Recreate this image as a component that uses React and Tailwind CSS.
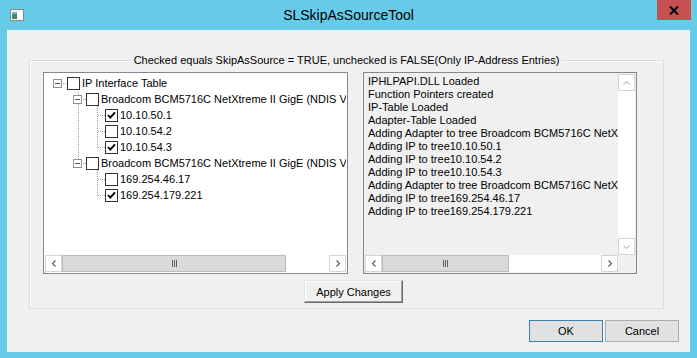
import React from 'react'

const TREE = [
  { level: 0, expander: true, checked: false, text: 'IP Interface Table' },
  { level: 1, expander: true, checked: false, text: 'Broadcom BCM5716C NetXtreme II GigE (NDIS VBD Client) #2' },
  { level: 2, checked: true, text: '10.10.50.1' },
  { level: 2, checked: false, text: '10.10.54.2' },
  { level: 2, checked: true, text: '10.10.54.3' },
  { level: 1, expander: true, checked: false, text: 'Broadcom BCM5716C NetXtreme II GigE (NDIS VBD Client) #1' },
  { level: 2, checked: false, text: '169.254.46.17' },
  { level: 2, checked: true, text: '169.254.179.221' },
]

const LOG = [
  'IPHLPAPI.DLL Loaded',
  'Function Pointers created',
  'IP-Table Loaded',
  'Adapter-Table Loaded',
  'Adding Adapter to tree Broadcom BCM5716C NetXtreme II GigE (NDIS VBD Client) #2',
  'Adding IP to tree10.10.50.1',
  'Adding IP to tree10.10.54.2',
  'Adding IP to tree10.10.54.3',
  'Adding Adapter to tree Broadcom BCM5716C NetXtreme II GigE (NDIS VBD Client) #1',
  'Adding IP to tree169.254.46.17',
  'Adding IP to tree169.254.179.221',
]

function Expander() {
  return (
    <div className="flex h-[9px] w-[9px] shrink-0 items-center justify-center border border-[#919191] bg-white">
      <div className="h-px w-[5px] bg-[#4d4d4d]" />
    </div>
  )
}

function Check({ checked }) {
  return (
    <div className="h-[13px] w-[13px] shrink-0 border border-[#333333] bg-white">
      {checked && (
        <svg width="11" height="11" viewBox="0 0 11 11">
          <path d="M2 5.2 L4.3 7.6 L9 2.4" fill="none" stroke="#000" strokeWidth="1.8" />
        </svg>
      )}
    </div>
  )
}

function TreeLines() {
  const dot = { stroke: '#a0a0a0', strokeWidth: 1, strokeDasharray: '1 1', shapeRendering: 'crispEdges' }
  return (
    <svg className="pointer-events-none absolute left-0 top-0" width="300" height="200">
      {/* root to checkbox */}
      <line x1="18" y1="9.5" x2="23" y2="9.5" style={dot} />
      {/* level 1 trunk */}
      <line x1="33.5" y1="18" x2="33.5" y2="89" style={dot} />
      <line x1="38" y1="25.5" x2="42" y2="25.5" style={dot} />
      <line x1="38" y1="89.5" x2="42" y2="89.5" style={dot} />
      {/* level 2 under adapter 1 */}
      <line x1="52.5" y1="30" x2="52.5" y2="73" style={dot} />
      <line x1="53" y1="41.5" x2="61" y2="41.5" style={dot} />
      <line x1="53" y1="57.5" x2="61" y2="57.5" style={dot} />
      <line x1="53" y1="73.5" x2="61" y2="73.5" style={dot} />
      {/* level 2 under adapter 2 */}
      <line x1="52.5" y1="94" x2="52.5" y2="121" style={dot} />
      <line x1="53" y1="105.5" x2="61" y2="105.5" style={dot} />
      <line x1="53" y1="121.5" x2="61" y2="121.5" style={dot} />
    </svg>
  )
}

function Arrow({ dir, light }) {
  const c = light ? '#c4c4c4' : '#606060'
  const d = {
    left: 'M9.5 4.5 L6.5 7.5 L9.5 10.5',
    right: 'M6.5 4.5 L9.5 7.5 L6.5 10.5',
    up: 'M4.5 9.5 L7.5 6.5 L10.5 9.5',
    down: 'M4.5 6.5 L7.5 9.5 L10.5 6.5',
  }[dir]
  return (
    <div className="h-[17px] w-[17px] shrink-0 border border-[#d4d4d4] bg-white">
      <svg width="15" height="15" viewBox="0 0 15 15">
        <path d={d} fill="none" stroke={c} strokeWidth="1.2" />
      </svg>
    </div>
  )
}

function Grip() {
  return (
    <div className="flex gap-px">
      <div className="h-[7px] w-px bg-[#606060]" />
      <div className="h-[7px] w-px bg-[#606060]" />
      <div className="h-[7px] w-px bg-[#606060]" />
    </div>
  )
}

function HScroll({ thumb }) {
  return (
    <div className="flex h-[17px] bg-white">
      <Arrow dir="left" />
      <div className={`flex items-center justify-center border border-[#bcbcbc] bg-[#dadada] ${thumb}`}>
        <Grip />
      </div>
      <div className="flex-1" />
      <Arrow dir="right" />
    </div>
  )
}

export default function App() {
  return (
    <div className="flex h-[358px] w-[697px] flex-col bg-[#65cbe8] font-['Liberation_Sans',Arial,sans-serif] text-[11px] text-black">
      {/* title bar */}
      <div className="grid h-[30px] shrink-0 grid-cols-[1fr_auto_1fr]">
        <div className="pl-[10px] pt-[9px]">
          <svg width="14" height="12" viewBox="0 0 14 12">
            <rect x="0.5" y="0.5" width="13" height="11" fill="#f4f4f4" stroke="#8a8a8a" />
            <rect x="2" y="3" width="5" height="7" fill="#3f8a6e" />
            <rect x="2" y="3" width="5" height="2" fill="#7fb0d0" />
            <rect x="8" y="3" width="4" height="7" fill="#ffffff" />
          </svg>
        </div>
        <div className="pt-[6px] text-[14px] leading-[18px] text-black">SLSkipAsSourceTool</div>
        <div className="flex justify-end pr-[6px]">
          <div className="flex h-[20px] w-[34px] items-center justify-center bg-[#c75050]">
            <svg width="10" height="9" viewBox="0 0 10 9">
              <path d="M1 0.5 L9 8.5 M9 0.5 L1 8.5" stroke="#000" strokeWidth="2" />
            </svg>
          </div>
        </div>
      </div>

      {/* client area */}
      <div className="mx-[7px] flex h-[322px] flex-col bg-[#f0f0f0] pl-[22px] pt-[30px]">
        {/* group box */}
        <div className="relative h-[249px] w-[635px] border border-[#d5dfe5] pl-[13px] pt-[11px] shadow-[inset_1px_1px_0_#ffffff]">
          <div className="absolute left-1/2 top-[-8px] -translate-x-1/2 whitespace-nowrap bg-[#f0f0f0] px-[2px] leading-[14px]">
            Checked equals SkipAsSource = TRUE, unchecked is FALSE(Only IP-Address Entries)
          </div>

          <div className="flex gap-[15px]">
            {/* tree */}
            <div className="flex h-[202px] w-[305px] flex-col border border-[#828790] bg-white p-px">
              <div className="relative flex-1 overflow-hidden pt-px">
                <TreeLines />
                {TREE.map((r, i) => (
                  <div key={i} className="relative flex h-4 items-center whitespace-nowrap leading-4">
                    {r.level === 0 && (
                      <div className="flex items-center pl-[8px]">
                        <Expander />
                        <div className="ml-[5px]"><Check checked={r.checked} /></div>
                      </div>
                    )}
                    {r.level === 1 && (
                      <div className="flex items-center pl-[28px]">
                        <Expander />
                        <div className="ml-[4px]"><Check checked={r.checked} /></div>
                      </div>
                    )}
                    {r.level === 2 && (
                      <div className="pl-[60px]"><Check checked={r.checked} /></div>
                    )}
                    <span className="ml-[2px]">{r.text}</span>
                  </div>
                ))}
              </div>
              <HScroll thumb="w-[224px]" />
            </div>

            {/* log */}
            <div className="flex h-[202px] w-[274px] flex-col border border-[#828790] bg-[#f0f0f0] p-px">
              <div className="flex flex-1">
                <div className="flex-1 overflow-hidden whitespace-nowrap pl-[3px] pt-px leading-[13px]">
                  {LOG.map((l, i) => (
                    <div key={i}>{l}</div>
                  ))}
                </div>
                <div className="flex w-[17px] flex-col bg-white">
                  <Arrow dir="up" light />
                  <div className="flex-1" />
                  <Arrow dir="down" light />
                </div>
              </div>
              <div className="flex">
                <div className="flex-1">
                  <HScroll thumb="w-[127px]" />
                </div>
                <div className="w-[17px]" />
              </div>
            </div>
          </div>

          <div className="mt-[6px] pl-[261px]">
            <button className="h-[23px] w-[99px] border border-b-[#696969] border-l-[#e3e3e3] border-r-[#696969] border-t-[#e3e3e3] bg-[#f0f0f0] leading-[20px] shadow-[inset_-1px_-1px_0_#a0a0a0,inset_1px_1px_0_#ffffff]">
              Apply Changes
            </button>
          </div>
        </div>

        {/* dialog buttons */}
        <div className="mt-[11px] flex justify-end gap-[2px] pr-[11px]">
          <button className="h-[22px] w-[74px] border border-[#3c7fb1] bg-[#e1e1e1] leading-[20px]">OK</button>
          <button className="h-[22px] w-[74px] border border-[#adadad] bg-[#e1e1e1] leading-[20px]">Cancel</button>
        </div>
      </div>
    </div>
  )
}
